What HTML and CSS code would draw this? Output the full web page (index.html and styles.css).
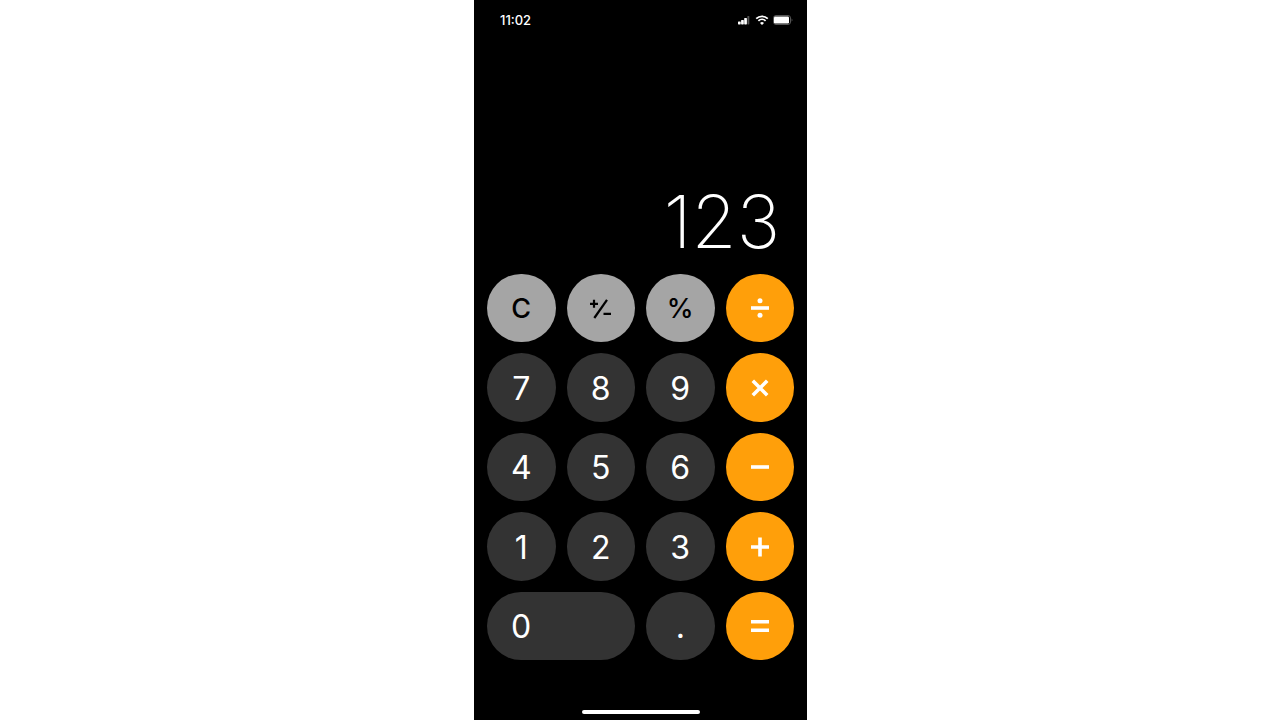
FILE: index.html
```html
<!DOCTYPE html>
<html lang="en">
<head>
  <meta charset="utf-8">
  <meta name="viewport" content="width=device-width, initial-scale=1">
  <title>Calculator</title>
  <link rel="stylesheet" href="styles.css">
</head>
<body>
  <main class="phone">
    <header class="status">
      <time class="clock">11:02</time>
      <div class="indicators">
        <svg class="signal" viewBox="0 0 13 10" role="img" aria-label="Signal">
          <rect x="0" y="6.4" width="2.7" height="3" rx=".6"/>
          <rect x="3.1" y="5" width="2.7" height="4.4" rx=".6"/>
          <rect x="6.2" y="3" width="2.7" height="6.4" rx=".6"/>
          <rect x="9.4" y="1" width="1.9" height="8.4" rx=".6" class="dim"/>
        </svg>
        <svg class="wifi" viewBox="0 0 14 10" role="img" aria-label="Wi-Fi">
          <path d="M1.2 3.6a8.4 8.4 0 0 1 11.6 0M3.4 5.9a5.2 5.2 0 0 1 7.2 0"/>
          <path class="fill" d="M7 10 5 7.9a2.9 2.9 0 0 1 4 0z"/>
        </svg>
        <svg class="battery" viewBox="0 0 20 10" role="img" aria-label="Battery">
          <rect class="case" x=".5" y=".5" width="17" height="9" rx="2.5"/>
          <rect x="1" y="1.5" width="15" height="7" rx="1.2"/>
          <path class="dim" d="M18.6 3.4v3.2c.6-.3.9-.9.9-1.6s-.3-1.3-.9-1.6z"/>
        </svg>
      </div>
    </header>

    <output class="display">123</output>

    <section class="keypad" aria-label="Keypad">
      <button class="key function">C</button>
      <button class="key function" aria-label="Plus or minus">
        <svg class="sign" viewBox="0 0 24 24"><path d="M1 6.8h8M5 2.8v8M14.5 16.8H22"/><path d="M18 2.8 5.3 21"/></svg>
      </button>
      <button class="key function">%</button>
      <button class="key operator" aria-label="Divide">
        <svg viewBox="0 0 24 24"><path d="M3 12h18"/><circle cx="12" cy="4.8" r="2.5"/><circle cx="12" cy="19.2" r="2.5"/></svg>
      </button>

      <button class="key">7</button>
      <button class="key">8</button>
      <button class="key">9</button>
      <button class="key operator" aria-label="Multiply">
        <svg viewBox="0 0 24 24"><path d="m4.8 4.8 14.4 14.4M19.2 4.8 4.8 19.2"/></svg>
      </button>

      <button class="key">4</button>
      <button class="key">5</button>
      <button class="key">6</button>
      <button class="key operator" aria-label="Subtract">
        <svg viewBox="0 0 24 24"><path d="M3 12h18"/></svg>
      </button>

      <button class="key">1</button>
      <button class="key">2</button>
      <button class="key">3</button>
      <button class="key operator" aria-label="Add">
        <svg viewBox="0 0 24 24"><path d="M3 12h18M12 2.5v19"/></svg>
      </button>

      <button class="key zero">0</button>
      <button class="key">.</button>
      <button class="key operator" aria-label="Equals">
        <svg viewBox="0 0 24 24"><path d="M3 7.7h18M3 16.3h18"/></svg>
      </button>
    </section>

    <footer class="home"><div class="home-bar"></div></footer>
  </main>
</body>
</html>
```
FILE: styles.css
```css
* {
  box-sizing: border-box;
}

body {
  margin: 0;
  padding-left: 1px;
  background: #fff;
  font-family: Inter, "Liberation Sans", sans-serif;
}

.phone {
  display: flex;
  flex-direction: column;
  max-width: 333px;
  min-height: 100vh;
  margin: 0 auto;
  padding: 0 13px;
  background: #000;
  color: #fff;
}

.status {
  display: flex;
  align-items: center;
  justify-content: space-between;
  height: 40px;
  padding: 0 1px 0 13px;
}

.clock {
  font-size: 13px;
  font-weight: 500;
}

.indicators {
  display: flex;
  align-items: center;
  gap: 4px;
  fill: #fff;
}

.indicators svg {
  height: 10px;
}

.signal {
  width: 13px;
}

.wifi {
  width: 14px;
  fill: none;
  stroke: #fff;
  stroke-width: 1.8;
}

.wifi .fill {
  fill: #fff;
  stroke: none;
}

.battery {
  width: 20px;
}

.battery .case {
  fill: none;
  stroke: #555;
}

.dim {
  fill: #555;
}

.display {
  display: flex;
  flex: 1;
  align-items: flex-end;
  justify-content: flex-end;
  padding: 0 14px 8px 0;
  font-size: 73px;
  font-weight: 250;
  line-height: 88px;
}

.keypad {
  display: grid;
  grid-template-columns: repeat(4, 1fr);
  gap: 11px;
}

.key {
  display: flex;
  align-items: center;
  justify-content: center;
  aspect-ratio: 1;
  padding: 2px 0 0;
  border: 0;
  border-radius: 40px;
  background: #333;
  color: #fff;
  font-family: inherit;
  font-size: 32px;
  cursor: pointer;
}

.function {
  background: #a5a5a5;
  color: #000;
  font-size: 27px;
  font-weight: 500;
}

.operator {
  padding-top: 1px;
  background: #ff9f0a;
}

.key svg {
  width: 24px;
  height: 24px;
  fill: currentColor;
  stroke: currentColor;
  stroke-width: 3.6;
}

.key circle {
  stroke: none;
}

.key .sign {
  stroke-width: 2.2;
}

.zero {
  grid-column: span 2;
  justify-content: flex-start;
  aspect-ratio: auto;
  padding-left: 24px;
}

.home {
  display: flex;
  align-items: flex-end;
  justify-content: center;
  height: 60px;
  padding-bottom: 6px;
}

.home-bar {
  width: 118px;
  height: 4px;
  border-radius: 2px;
  background: #fff;
}
```
